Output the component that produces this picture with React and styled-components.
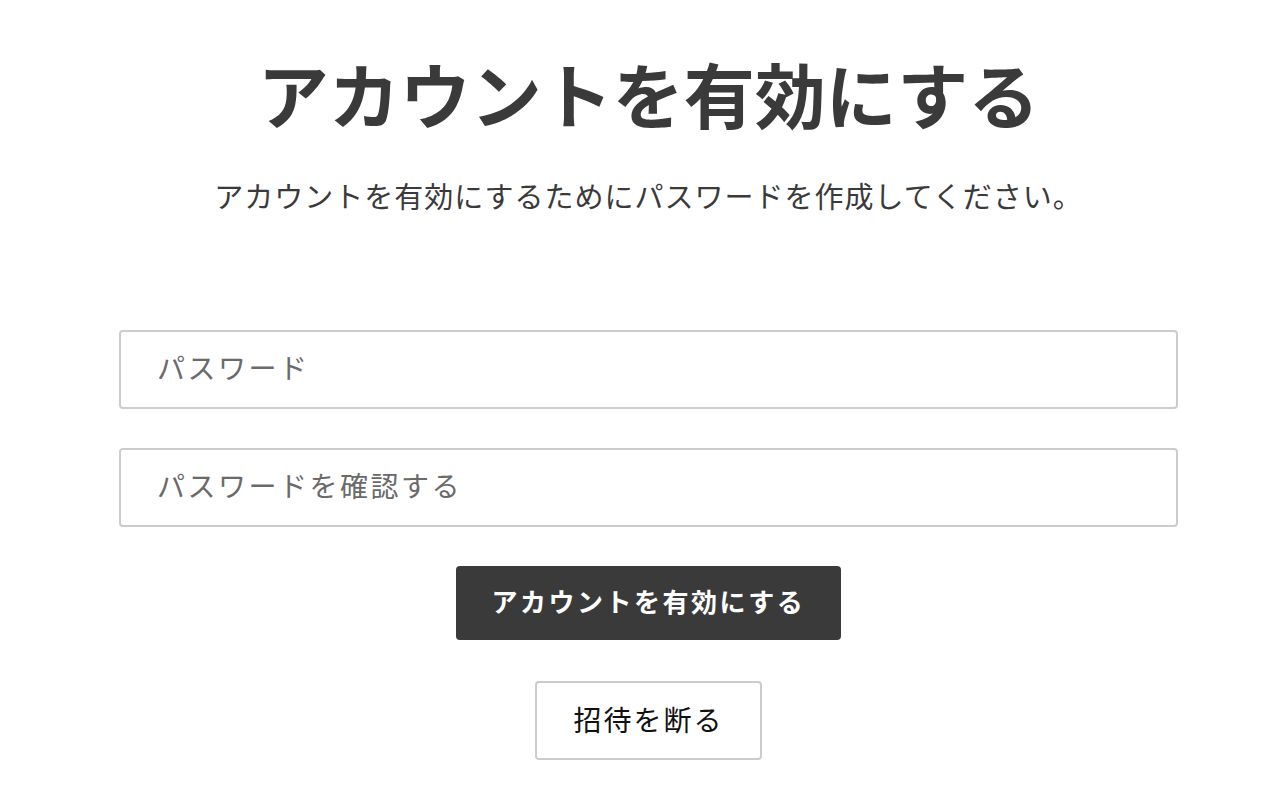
import styled, {createGlobalStyle} from "styled-components";

const Global = createGlobalStyle`
    body {
        margin: 0;
        background: #ffffff;
        font-family: "Noto Sans CJK JP", "Noto Sans", sans-serif;
    }
`

const Page = styled.div`
    width: 1059px;
    margin-left: 119px;
    display: flex;
    flex-direction: column;
    align-items: center;
`

const Title = styled.h1`
    margin: 50px 0 0;
    font-size: 71px;
    line-height: 84px;
    font-weight: 700;
    color: #3a3a3a;
`

const Lead = styled.p`
    margin: 41px 0 0;
    font-size: 29px;
    line-height: 40px;
    letter-spacing: 1px;
    color: #3a3a3a;
`

const Form = styled.form`
    width: 100%;
    margin-top: 115px;
    display: flex;
    flex-direction: column;
    align-items: center;
    gap: 39px;
`

const Field = styled.input`
    box-sizing: border-box;
    width: 100%;
    height: 79px;
    padding: 0 36px 5px;
    border: 2px solid #cccccc;
    border-radius: 4px;
    font-family: inherit;
    font-size: 28px;
    letter-spacing: 2.5px;
    color: #333;
    outline: none;
    &::placeholder {
        color: #6a6a6a;
    }
`

const Button = styled.button`
    box-sizing: border-box;
    font-family: inherit;
    cursor: pointer;
    border-radius: 4px;
    height: ${p => p.$primary ? "74px" : "79px"};
    padding: 0 36px ${p => p.$primary ? "5px" : "4px"};
    background: ${p => p.$primary ? "#3a3a3a" : "#ffffff"};
    color: ${p => p.$primary ? "#ffffff" : "#111111"};
    border: ${p => p.$primary ? "none" : "2px solid #cccccc"};
    font-size: ${p => p.$primary ? "26px" : "28px"};
    font-weight: ${p => p.$primary ? 700 : 400};
    letter-spacing: ${p => p.$primary ? "2.5px" : "2px"};
`

export default function App() {
    return (
        <>
            <Global />
            <Page>
                <Title>アカウントを有効にする</Title>
                <Lead>アカウントを有効にするためにパスワードを作成してください。</Lead>
                <Form onSubmit={e => e.preventDefault()}>
                    <Field type="password" placeholder="パスワード" />
                    <Field type="password" placeholder="パスワードを確認する" />
                    <Button $primary type="submit">アカウントを有効にする</Button>
                </Form>
                <Button type="button" style={{marginTop: 41}}>招待を断る</Button>
            </Page>
        </>
    )
}
